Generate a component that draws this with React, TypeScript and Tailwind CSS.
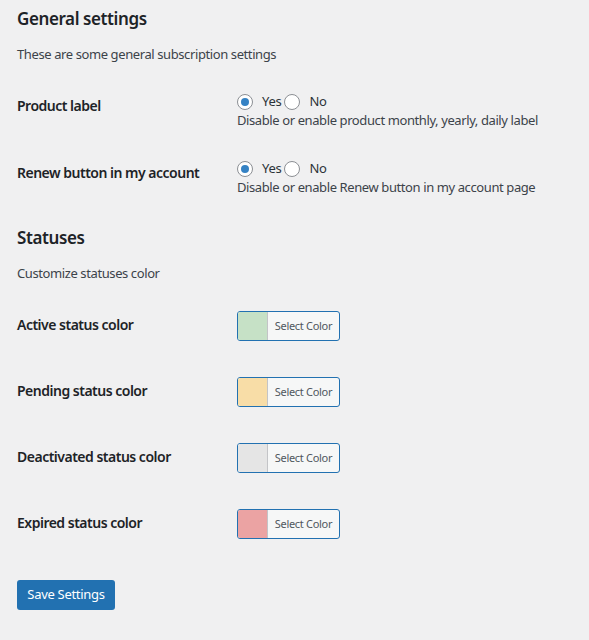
import { ReactNode } from 'react';

const font = { fontFamily: '"Noto Sans", "Open Sans", sans-serif' };

type Radio = { checked?: boolean };

const RadioDot = ({ checked }: Radio) => (
  <span className="flex h-4 w-4 flex-shrink-0 items-center justify-center rounded-full border border-[#8c8f94] bg-white">
    {checked && <span className="h-2 w-2 rounded-full bg-[#3582c4]" />}
  </span>
);

const Row = ({ label, children }: { label: string; children: ReactNode }) => (
  <div className="flex pt-[30px] pb-px">
    <div className="w-[220px] flex-shrink-0 pt-[3px] text-[14px] leading-5 font-semibold tracking-[-0.5px] text-[#1d2327]">
      {label}
    </div>
    <div>{children}</div>
  </div>
);

const YesNo = ({ desc }: { desc: string }) => (
  <>
    <div className="flex h-[18px] items-center text-[13px] tracking-[-0.3px] text-[#2c3338]">
      <RadioDot checked />
      <span className="ml-[9px] mr-[3px]">Yes</span>
      <RadioDot />
      <span className="ml-[9px]">No</span>
    </div>
    <p className="text-[13px] leading-[18px] tracking-[-0.4px] text-[#3c434a]">{desc}</p>
  </>
);

const ColorRow = ({ label, color }: { label: string; color: string }) => (
  <div className="flex pt-[29px] pb-[7px]">
    <div className="w-[220px] flex-shrink-0 pt-[4px] text-[14px] leading-5 font-semibold tracking-[-0.5px] text-[#1d2327]">
      {label}
    </div>
    <div className="flex h-[30px] w-[103px] overflow-hidden rounded-[3px] border border-[#2271b1] bg-[#f6f7f7]">
      <span className="w-[30px] border-r border-[#c3c4c7]" style={{ background: color }} />
      <span className="flex flex-1 items-center justify-center text-[11px] tracking-[-0.3px] text-[#50575e]">
        Select Color
      </span>
    </div>
  </div>
);

export default function App() {
  return (
    <div className="min-h-[640px] bg-[#f0f0f1] px-[17px] pt-[7px]" style={font}>
      <h2 className="text-[17px] leading-[23px] font-semibold tracking-[-0.4px] text-[#1d2327]">General settings</h2>
      <p className="mt-[15px] text-[13px] leading-[18px] tracking-[-0.4px] text-[#3c434a]">
        These are some general subscription settings
      </p>

      <Row label="Product label">
        <YesNo desc="Disable or enable product monthly, yearly, daily label" />
      </Row>
      <Row label="Renew button in my account">
        <YesNo desc="Disable or enable Renew button in my account page" />
      </Row>

      <h2 className="mt-[29px] text-[17px] leading-[23px] font-semibold tracking-[-0.4px] text-[#1d2327]">Statuses</h2>
      <p className="mt-[15px] text-[13px] leading-[18px] tracking-[-0.4px] text-[#3c434a]">Customize statuses color</p>

      <ColorRow label="Active status color" color="#c6e1c6" />
      <ColorRow label="Pending status color" color="#f8dda7" />
      <ColorRow label="Deactivated status color" color="#e5e5e5" />
      <ColorRow label="Expired status color" color="#eba3a3" />

      <button className="mt-[34px] h-[30px] w-[98px] rounded-[3px] bg-[#2271b1] text-[13px] tracking-[-0.3px] text-white">
        Save Settings
      </button>
    </div>
  );
}
